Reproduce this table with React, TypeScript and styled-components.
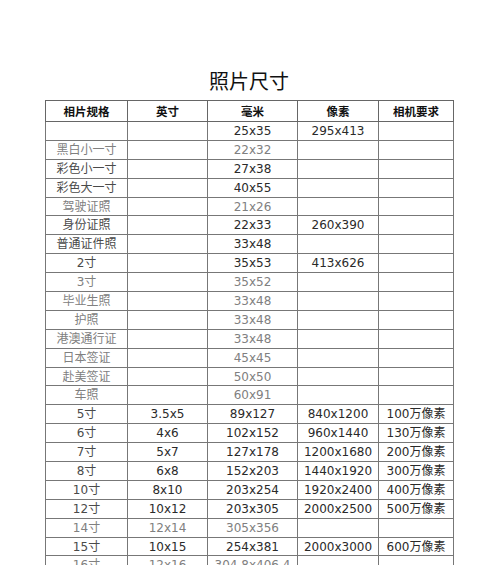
import React from 'react';
import styled, { createGlobalStyle } from 'styled-components';

const GlobalStyle = createGlobalStyle`
  html, body {
    margin: 0;
    padding: 0;
    background: #ffffff;
    overflow: hidden;
  }
`;

const Page = styled.div`
  width: 500px;
  height: 565px;
  overflow: hidden;
  padding-top: 71px;
  box-sizing: border-box;
`;

const Title = styled.h1`
  margin: 0 0 9px 0;
  text-align: center;
  font-family: "Noto Sans CJK SC", sans-serif;
  font-weight: 400;
  font-size: 20px;
  line-height: 20px;
  color: #111;
  padding-right: 2px;
`;

const Table = styled.table`
  margin-left: 45px;
  border-collapse: collapse;
  table-layout: fixed;
  width: 408px;
  border: 1px solid #555;
`;

const HeadCell = styled.th`
  height: 20px;
  padding: 0;
  border: 1px solid #666;
  font-family: "Noto Sans CJK SC", sans-serif;
  font-weight: 700;
  font-size: 11.5px;
  line-height: 12px;
  color: #111;
  text-align: center;
  vertical-align: middle;
`;

const Row = styled.tr`
  height: 18.9px;
`;

const Cell = styled.td<{ $muted?: boolean; $label?: boolean }>`
  padding: 0;
  border: 1px solid #777;
  font-family: "DejaVu Sans", "Noto Sans CJK SC", sans-serif;
  font-size: 12px;
  line-height: 12px;
  white-space: nowrap;
  text-align: center;
  vertical-align: middle;
  color: ${p => (p.$muted ? '#808080' : p.$label ? '#4a4a4a' : '#2a2a2a')};
`;

type Spec = { cells: string[]; muted?: boolean };

const headers = ['相片规格', '英寸', '毫米', '像素', '相机要求'];
const widths = [82, 80, 90, 81, 75];

const rows: Spec[] = [
  { cells: ['', '', '25x35', '295x413', ''] },
  { cells: ['黑白小一寸', '', '22x32', '', ''], muted: true },
  { cells: ['彩色小一寸', '', '27x38', '', ''] },
  { cells: ['彩色大一寸', '', '40x55', '', ''] },
  { cells: ['驾驶证照', '', '21x26', '', ''], muted: true },
  { cells: ['身份证照', '', '22x33', '260x390', ''] },
  { cells: ['普通证件照', '', '33x48', '', ''] },
  { cells: ['2寸', '', '35x53', '413x626', ''] },
  { cells: ['3寸', '', '35x52', '', ''], muted: true },
  { cells: ['毕业生照', '', '33x48', '', ''], muted: true },
  { cells: ['护照', '', '33x48', '', ''], muted: true },
  { cells: ['港澳通行证', '', '33x48', '', ''], muted: true },
  { cells: ['日本签证', '', '45x45', '', ''], muted: true },
  { cells: ['赴美签证', '', '50x50', '', ''], muted: true },
  { cells: ['车照', '', '60x91', '', ''], muted: true },
  { cells: ['5寸', '3.5x5', '89x127', '840x1200', '100万像素'] },
  { cells: ['6寸', '4x6', '102x152', '960x1440', '130万像素'] },
  { cells: ['7寸', '5x7', '127x178', '1200x1680', '200万像素'] },
  { cells: ['8寸', '6x8', '152x203', '1440x1920', '300万像素'] },
  { cells: ['10寸', '8x10', '203x254', '1920x2400', '400万像素'] },
  { cells: ['12寸', '10x12', '203x305', '2000x2500', '500万像素'] },
  { cells: ['14寸', '12x14', '305x356', '', ''], muted: true },
  { cells: ['15寸', '10x15', '254x381', '2000x3000', '600万像素'] },
  { cells: ['16寸', '12x16', '304.8x406.4', '', ''], muted: true },
];

export default function App() {
  return (
    <Page>
      <GlobalStyle />
      <Title>照片尺寸</Title>
      <Table>
        <colgroup>
          {widths.map((w, i) => (
            <col key={i} style={{ width: w }} />
          ))}
        </colgroup>
        <thead>
          <tr>
            {headers.map(h => (
              <HeadCell key={h}>{h}</HeadCell>
            ))}
          </tr>
        </thead>
        <tbody>
          {rows.map((r, i) => (
            <Row key={i}>
              {r.cells.map((c, j) => (
                <Cell key={j} $muted={r.muted} $label={j === 0}>
                  {c}
                </Cell>
              ))}
            </Row>
          ))}
        </tbody>
      </Table>
    </Page>
  );
}
